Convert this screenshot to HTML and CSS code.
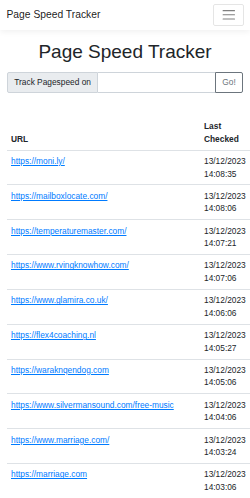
FILE: index.html
```html
<!DOCTYPE html>
<html lang="en">
<head>
  <meta charset="UTF-8">
  <meta name="viewport" content="width=device-width, initial-scale=1.0">
  <title>Page Speed Tracker</title>
  <link rel="stylesheet" href="styles.css">
</head>
<body>
  <nav class="navbar">
    <a class="brand" href="#">Page Speed Tracker</a>
    <button class="toggler" type="button">
      <svg class="toggler-icon" viewBox="0 0 30 30">
        <path d="M4 7h22M4 15h22M4 23h22" stroke="rgba(0,0,0,0.5)" stroke-width="2" stroke-linecap="round" fill="none"/>
      </svg>
    </button>
  </nav>

  <main class="container">
    <h1>Page Speed Tracker</h1>

    <form class="input-group">
      <span class="prepend">Track Pagespeed on</span>
      <input type="text" class="url-input">
      <button type="button" class="go-btn">Go!</button>
    </form>

    <div class="table-wrap">
      <table class="sites">
        <thead>
          <tr>
            <th>URL</th>
            <th class="date-col">Last Checked</th>
          </tr>
        </thead>
        <tbody>
          <tr><td><a href="#">https://moni.ly/</a></td><td class="date-col">13/12/2023 14:08:35</td></tr>
          <tr><td><a href="#">https://mailboxlocate.com/</a></td><td class="date-col">13/12/2023 14:08:06</td></tr>
          <tr><td><a href="#">https://temperaturemaster.com/</a></td><td class="date-col">13/12/2023 14:07:21</td></tr>
          <tr><td><a href="#">https://www.rvingknowhow.com/</a></td><td class="date-col">13/12/2023 14:07:06</td></tr>
          <tr><td><a href="#">https://www.glamira.co.uk/</a></td><td class="date-col">13/12/2023 14:06:06</td></tr>
          <tr><td><a href="#">https://flex4coaching.nl</a></td><td class="date-col">13/12/2023 14:05:27</td></tr>
          <tr><td><a href="#">https://waraknqendog.com</a></td><td class="date-col">13/12/2023 14:05:06</td></tr>
          <tr><td><a href="#">https://www.silvermansound.com/free-music</a></td><td class="date-col">13/12/2023 14:04:06</td></tr>
          <tr><td><a href="#">https://www.marriage.com/</a></td><td class="date-col">13/12/2023 14:03:24</td></tr>
          <tr><td><a href="#">https://marriage.com</a></td><td class="date-col">13/12/2023 14:03:06</td></tr>
        </tbody>
      </table>
    </div>
  </main>
</body>
</html>
```

FILE: styles.css
```css
body {
  margin: 0;
  font-family: "Liberation Sans", Arial, sans-serif;
  font-size: 8.35px;
  line-height: 1.5;
  color: #212529;
  background: #fff;
}

.navbar {
  display: flex;
  align-items: center;
  justify-content: space-between;
  padding: 4.2px 6.5px;
  background: #fff;
  box-shadow: 0 2px 6px rgba(0, 0, 0, 0.06);
}

.brand {
  font-size: 10.3px;
  line-height: 1.5;
  padding: 2.6px 0;
  color: rgba(0, 0, 0, 0.9);
  text-decoration: none;
}

.toggler {
  display: flex;
  padding: 2.1px 6.26px;
  background: transparent;
  border: 1px solid rgba(0, 0, 0, 0.1);
  border-radius: 2px;
}

.toggler-icon {
  width: 15.6px;
  height: 15.6px;
}

.container {
  padding: 0 7px;
}

h1 {
  margin: 10.7px 0 8.5px;
  font-size: 19px;
  font-weight: 400;
  line-height: 1.2;
  text-align: center;
}

.input-group {
  display: flex;
  margin: 0;
}

.prepend {
  padding: 3.1px 6.26px;
  background: #e9ecef;
  border: 1px solid #ced4da;
  border-radius: 2px 0 0 2px;
  white-space: nowrap;
}

.url-input {
  flex: 1;
  min-width: 0;
  margin: 0;
  padding: 3.1px 6.26px;
  font: inherit;
  border: 1px solid #ced4da;
  border-left: none;
  border-right: none;
}

.go-btn {
  padding: 3.1px 6.26px;
  font: inherit;
  color: #6c757d;
  background: transparent;
  border: 1px solid #6c757d;
  border-radius: 0 2px 2px 0;
}

.table-wrap {
  margin: 23px -7px 0 0;
}

.sites {
  width: 100%;
  border-collapse: collapse;
}

.sites th,
.sites td {
  padding: 4.4px 4px;
  text-align: left;
  vertical-align: top;
  border-top: 1px solid #dee2e6;
}

.sites th {
  vertical-align: bottom;
  border-top: none;
  border-bottom: 1px solid #dee2e6;
}

.sites thead + tbody tr:first-child td {
  border-top: none;
}

.date-col {
  width: 42px;
}

.sites a {
  color: #007bff;
  text-decoration: underline;
}
```
